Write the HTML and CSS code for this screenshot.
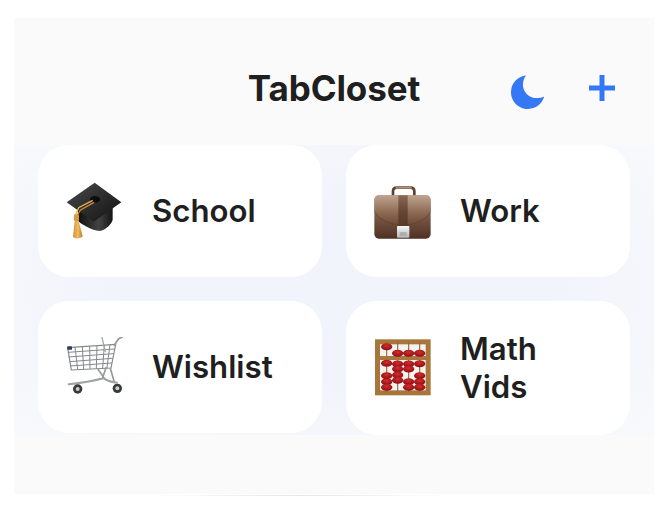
FILE: index.html
```html
<!DOCTYPE html>
<html lang="en">
<head>
<meta charset="utf-8">
<title>TabCloset</title>
<link rel="stylesheet" href="styles.css">
</head>
<body>
<main class="panel">
  <header class="header">
    <span></span>
    <h1 class="title">TabCloset</h1>
    <div class="actions">
      <svg class="moon" viewBox="0 0 34 35"><path d="M15 .4A16.900 16.900 0 1 0 33.200 21.600C25 25 17 22.500 13.500 16 11 11 11.500 5 15 .4Z"/></svg>
      <svg class="plus" viewBox="0 0 26 26"><path d="M13 0V26M0 13H26"/></svg>
    </div>
  </header>
  <section class="grid">
    <a class="card">
      <svg class="icon" viewBox="48 30 180 180">
        <defs>
          <linearGradient id="capTop" x1="0" y1="0" x2="1" y2="1"><stop offset="0" stop-color="#4a4a4a"/><stop offset="1" stop-color="#111"/></linearGradient>
          <linearGradient id="capBase" x1="0" y1="0" x2="1" y2="0"><stop offset="0" stop-color="#0e0e0e"/><stop offset=".6" stop-color="#434343"/><stop offset="1" stop-color="#141414"/></linearGradient>
          <linearGradient id="gold" x1="0" y1="0" x2="1" y2="0"><stop offset="0" stop-color="#d18f2f"/><stop offset=".5" stop-color="#f0bb62"/><stop offset="1" stop-color="#bd7c22"/></linearGradient>
        </defs>
        <path fill="url(#capBase)" d="M84 110V150C105 168 135 180 150 180C170 174 184 160 188 146L188 110Z"/>
        <path fill="url(#capTop)" d="M50 94L134 35L214 94L131 152Z"/>
        <ellipse cx="135" cy="85" rx="15" ry="10" fill="#0c0c0c"/>
        <path fill="none" stroke="#eab050" stroke-width="4" d="M128 88L86 110L78 130"/>
        <path fill="none" stroke="#c98a2f" stroke-width="4" d="M132 94L92 117L82 132"/>
        <rect x="72" y="130" width="15" height="20" rx="3" fill="#d99a3e"/>
        <path fill="url(#gold)" d="M74 150H86L98 196C90 204 75 204 69 197Z"/>
      </svg>
      <span class="label">School</span>
    </a>
    <a class="card">
      <svg class="icon" viewBox="27 15 180 180">
        <defs>
          <linearGradient id="caseBody" x1="0" y1="0" x2="0" y2="1"><stop offset="0" stop-color="#a98a73"/><stop offset=".45" stop-color="#7d5b47"/><stop offset="1" stop-color="#4e3024"/></linearGradient>
          <linearGradient id="caseFlap" x1="0" y1="0" x2="0" y2="1"><stop offset="0" stop-color="#bfa48f"/><stop offset=".6" stop-color="#8b6852"/><stop offset="1" stop-color="#6b4936"/></linearGradient>
          <linearGradient id="caseStrap" x1="0" y1="0" x2="0" y2="1"><stop offset="0" stop-color="#8a6a55"/><stop offset=".5" stop-color="#664634"/><stop offset="1" stop-color="#553828"/></linearGradient>
          <linearGradient id="clasp" x1="0" y1="0" x2="0" y2="1"><stop offset="0" stop-color="#f8f8f8"/><stop offset="1" stop-color="#b5b5b5"/></linearGradient>
        </defs>
        <path fill="none" stroke="#5a4132" stroke-width="8" d="M84 62V46Q84 35 96 35H136Q148 35 148 46V62"/>
        <path fill="none" stroke="#b38e6f" stroke-width="6" d="M92 35H140"/>
        <rect x="28" y="58" width="169" height="130" rx="14" fill="url(#caseBody)"/>
        <path fill="url(#caseFlap)" d="M42 58H183Q197 58 197 72V108Q170 144 122 147H106Q55 144 28 108V72Q28 58 42 58Z"/>
        <path fill="none" stroke="#4e3024" stroke-width="2" opacity=".6" d="M28 108Q55 144 106 147H122Q170 144 197 108"/>
        <rect x="100" y="58" width="28" height="94" fill="url(#caseStrap)"/>
        <rect x="96" y="150" width="37" height="35" rx="3" fill="url(#clasp)"/>
        <rect x="104" y="168" width="21" height="11" rx="2" fill="#8f8f8f" opacity=".5"/>
      </svg>
      <span class="label">Work</span>
    </a>
    <a class="card">
      <svg class="icon" viewBox="33 36 180 180">
        <g fill="none" stroke="#85898b" stroke-linecap="round">
          <path stroke-width="3.500" d="M38 68L182 58L168 129L49 135Z"/>
          <path stroke-width="3" d="M60 67L68 133M82 65L86 132M104 64L105 131M126 62L124 130M148 61L143 129M165 59L156 128"/>
          <path stroke-width="3" d="M40 82L178 72M42 96L175 86M44 110L172 100M46 123L170 114"/>
          <path stroke-width="5" stroke="#96999b" d="M178 60L191 41L202 36"/>
          <path stroke-width="4" stroke="#a5a8a9" d="M141 38L151 80"/>
          <path stroke-width="5" stroke="#96999b" d="M130 134L147 158M166 130L178 172M153 128L143 158"/>
          <path stroke-width="6" stroke="#a0a3a4" d="M41 178Q100 172 145 160Q165 172 186 173"/>
        </g>
        <rect x="37" y="64" width="14" height="10" rx="1" fill="#26425e"/>
        <circle cx="68" cy="192" r="14" fill="#38393a"/><circle cx="68" cy="192" r="6" fill="#c9cbcc"/>
        <circle cx="187" cy="190" r="14" fill="#38393a"/><circle cx="187" cy="190" r="6" fill="#c9cbcc"/>
      </svg>
      <span class="label">Wishlist</span>
    </a>
    <a class="card">
      <svg class="icon" viewBox="27 36 180 180">
        <defs>
          <radialGradient id="bead" cx=".5" cy=".35" r=".7"><stop offset="0" stop-color="#d92b2d"/><stop offset="1" stop-color="#7f0c0e"/></radialGradient>
          <ellipse id="b" rx="17" ry="10.500" fill="url(#bead)"/>
        </defs>
        <rect x="37.500" y="47.500" width="152" height="153" fill="#f6f3ee" stroke="#a8763a" stroke-width="15"/>
        <path fill="none" stroke="#8f6c4c" stroke-width="3.500" d="M65 48V200M98 48V200M131 48V200M164 48V200"/>
        <rect x="40" y="90" width="148" height="12" fill="#a8773b"/>
        <use href="#b" x="65" y="62"/><use href="#b" x="98" y="82"/><use href="#b" x="131" y="82"/><use href="#b" x="164" y="82"/>
        <use href="#b" x="65" y="112"/><use href="#b" x="98" y="114"/><use href="#b" x="131" y="114"/><use href="#b" x="164" y="113"/>
        <use href="#b" x="98" y="129"/><use href="#b" x="131" y="129"/>
        <use href="#b" x="65" y="149"/><use href="#b" x="98" y="147"/><use href="#b" x="164" y="149"/>
        <use href="#b" x="65" y="167"/><use href="#b" x="98" y="163"/><use href="#b" x="131" y="167"/><use href="#b" x="164" y="167"/>
        <use href="#b" x="65" y="184"/><use href="#b" x="131" y="184"/><use href="#b" x="164" y="184"/>
      </svg>
      <span class="label">Math Vids</span>
    </a>
  </section>
</main>
<div class="edge"></div>
</body>
</html>
```

FILE: styles.css
```css
* { box-sizing: border-box; }

html, body { margin: 0; height: 100%; background: #fff; }

body {
  padding: 18px 16px 0 14px;
  font-family: Inter, "Liberation Sans", sans-serif;
  color: #1f1f1f;
  overflow: hidden;
}

.panel {
  display: flex;
  flex-direction: column;
  height: 476px;
  background: #fafafb;
}

.header {
  display: grid;
  grid-template-columns: 1fr auto 1fr;
  align-items: center;
  height: 127px;
  flex: none;
  padding: 13px 0 0;
}

.title {
  margin: 0;
  font-size: 35px;
  line-height: 40px;
  font-weight: 700;
  letter-spacing: -0.1px;
}

.actions {
  display: flex;
  align-items: center;
  justify-content: flex-end;
  gap: 44px;
  padding: 8px 39px 0 0;
}

.moon { width: 34px; height: 35px; fill: #3478f6; }

.plus {
  width: 26px;
  height: 26px;
  margin-bottom: 9px;
  fill: none;
  stroke: #3478f6;
  stroke-width: 5;
}

.grid {
  display: grid;
  grid-template-columns: 284px 284px;
  column-gap: 24px;
  row-gap: 24.500px;
  align-items: start;
  align-content: start;
  height: 290px;
  padding: 0 24px;
  background: radial-gradient(ellipse at 50% 50%, #f1f4fb 45%, #f8f9fc 100%);
}

.card {
  display: flex;
  align-items: center;
  gap: 26px;
  min-height: 131.500px;
  padding: 29px 28px;
  background: #fff;
  border-radius: 31px;
}

.icon { flex: none; width: 60px; height: 60px; }

.label {
  font-size: 31.200px;
  line-height: 38px;
  font-weight: 600;
}

.edge {
  width: 300px;
  height: 1px;
  margin: 1px 0 0 136px;
  background: linear-gradient(90deg, transparent, #e6e6e8 50%, transparent);
}
```
